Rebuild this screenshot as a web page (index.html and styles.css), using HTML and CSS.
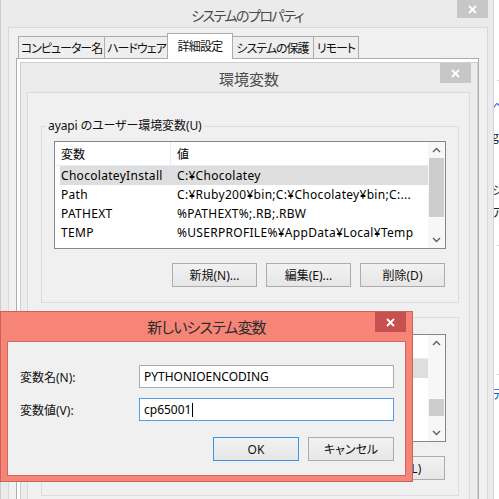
FILE: index.html
```html
<!DOCTYPE html>
<html lang="ja">
<head>
<meta charset="utf-8">
<title>環境変数</title>
<link rel="stylesheet" href="styles.css">
</head>
<body>
<div class="desk">

  <div class="bgwin">
    <div class="bg-rule r1"></div>
    <span class="bg-txt blue t1">ペ</span>
    <span class="bg-txt t2">g</span>
    <span class="bg-txt t3">シ</span>
    <span class="bg-txt t4">ア</span>
    <div class="bg-rule r2"></div>
    <div class="bg-rule r3"></div>
    <span class="bg-txt blue t5">デ</span>
  </div>

  <div class="win sys">
    <div class="titlebar tb-sys">
      <span class="title">システムのプロパティ</span>
      <span class="close gray"><svg width="9" height="9" viewBox="0 0 9 9"><path d="M1 1 L8 8 M8 1 L1 8" stroke="#fff" stroke-width="1.8"/></svg></span>
    </div>
    <div class="client sys-client">
      <div class="tabs">
        <span class="tab w1">コンピューター名</span>
        <span class="tab w2">ハードウェア</span>
        <span class="tab w3 active">詳細設定</span>
        <span class="tab w4">システムの保護</span>
        <span class="tab w5">リモート</span>
      </div>
      <div class="tabpanel"></div>
    </div>
  </div>

  <div class="win env">
    <div class="titlebar tb-env">
      <span class="title">環境変数</span>
      <span class="close gray"><svg width="9" height="9" viewBox="0 0 9 9"><path d="M1 1 L8 8 M8 1 L1 8" stroke="#fff" stroke-width="1.8"/></svg></span>
    </div>
    <div class="client env-client">
      <fieldset class="group g1">
        <legend>ayapi のユーザー環境変数(U)</legend>
        <div class="list">
          <div class="list-body">
            <div class="lv-head"><span class="c1">変数</span><span class="c2">値</span></div>
            <div class="lv-row sel"><span class="c1">ChocolateyInstall</span><span class="c2">C:¥Chocolatey</span></div>
            <div class="lv-row"><span class="c1">Path</span><span class="c2">C:¥Ruby200¥bin;C:¥Chocolatey¥bin;C:...</span></div>
            <div class="lv-row"><span class="c1">PATHEXT</span><span class="c2">%PATHEXT%;.RB;.RBW</span></div>
            <div class="lv-row"><span class="c1">TEMP</span><span class="c2">%USERPROFILE%¥AppData¥Local¥Temp</span></div>
          </div>
          <div class="vscroll">
            <span class="sb-btn"><svg width="9" height="6" viewBox="0 0 9 6"><path d="M1 5 L4.5 1.5 L8 5" fill="none" stroke="#606060" stroke-width="1.4"/></svg></span>
            <span class="sb-track"><span class="thumb th1"></span></span>
            <span class="sb-btn"><svg width="9" height="6" viewBox="0 0 9 6"><path d="M1 1 L4.5 4.5 L8 1" fill="none" stroke="#606060" stroke-width="1.4"/></svg></span>
          </div>
        </div>
        <div class="btnrow">
          <button class="btn">新規(N)...</button>
          <button class="btn">編集(E)...</button>
          <button class="btn">削除(D)</button>
        </div>
      </fieldset>

      <fieldset class="group g2">
        <div class="list">
          <div class="list-body">
            <div class="lv-head"><span class="c1"></span><span class="c2"></span></div>
            <div class="lv-row sel"></div>
          </div>
          <div class="vscroll">
            <span class="sb-btn"><svg width="9" height="6" viewBox="0 0 9 6"><path d="M1 5 L4.5 1.5 L8 5" fill="none" stroke="#606060" stroke-width="1.4"/></svg></span>
            <span class="sb-track"><span class="thumb th2"></span></span>
            <span class="sb-btn"><svg width="9" height="6" viewBox="0 0 9 6"><path d="M1 1 L4.5 4.5 L8 1" fill="none" stroke="#606060" stroke-width="1.4"/></svg></span>
          </div>
        </div>
        <div class="btnrow">
          <button class="btn"></button>
          <button class="btn"></button>
          <button class="btn">削除(L)</button>
        </div>
      </fieldset>
    </div>
  </div>

  <div class="win newvar">
    <div class="titlebar tb-new">
      <span class="title">新しいシステム変数</span>
      <span class="close red"><svg width="9" height="9" viewBox="0 0 9 9"><path d="M1 1 L8 8 M8 1 L1 8" stroke="#fff" stroke-width="1.8"/></svg></span>
    </div>
    <div class="client new-client">
      <div class="form">
        <label class="flabel">変数名(N):</label>
        <div class="input">PYTHONIOENCODING</div>
        <label class="flabel">変数値(V):</label>
        <div class="input focus">cp65001<span class="caret"></span></div>
      </div>
      <div class="btnrow dlg-btns">
        <button class="btn default">OK</button>
        <button class="btn">キャンセル</button>
      </div>
    </div>
  </div>

</div>
</body>
</html>
```

FILE: styles.css
```css
* { box-sizing: border-box; }
html, body { margin: 0; padding: 0; }
body {
  width: 499px;
  height: 499px;
  overflow: hidden;
  background: #fff;
  font-family: "Noto Sans", "Noto Sans CJK JP", sans-serif;
  font-size: 12px;
  color: #000;
  font-feature-settings: "palt";
}
.desk { position: relative; width: 499px; height: 499px; overflow: hidden; }

/* background window at the right edge */
.bgwin {
  position: absolute; left: 494px; top: 0; width: 20px; height: 499px;
  background: #fff; display: flex; flex-direction: column;
  font-family: "Noto Sans CJK JP", sans-serif; font-size: 12px; line-height: 14px;
}
.bg-rule { height: 1px; background: #d6d6d6; margin-left: 3px; }
.r1 { margin-top: 80px; }
.r2 { margin-top: 26px; }
.r3 { margin-top: 128px; }
.bg-txt { display: block; color: #222; margin-left: -2px; }
.bg-txt.blue { color: #1a5fd0; }
.t1 { margin-top: 18px; }
.t2 { margin-top: 16px; }
.t3 { margin-top: 40px; }
.t4 { margin-top: 8px; }
.t5 { margin-top: 12px; }

/* generic window */
.win { position: absolute; display: flex; flex-direction: column; }
.titlebar { display: grid; flex: none; }
.titlebar > * { grid-area: 1 / 1; }
.title {
  justify-self: center; align-self: center;
  font-family: "Noto Sans CJK JP", sans-serif;
  font-size: 15px; line-height: 18px; color: #4a4a4a;
  white-space: nowrap;
}
.close {
  justify-self: end; align-self: start;
  width: 31px; height: 20px;
  display: flex; align-items: center; justify-content: center;
}
.close svg { display: block; }
.close.gray { background: #c7c7c7; }
.close.red { background: #c75050; }
.client { background: #f0f0f0; flex: 1; display: flex; flex-direction: column; }

/* system properties window */
.sys {
  left: 0; top: 0; width: 494px; height: 530px;
  background: #ebebeb;
  border-left: 1px solid #cdcdcd; border-right: 1px solid #d4d4d4;
}
.tb-sys { height: 27px; padding-top: 2px; }
.tb-sys .title { font-size: 14px; letter-spacing: -1.5px; }
.tb-sys .close { height: 18px; margin-right: 5px; margin-top: -2px; }
.sys-client {
  margin: 0 5px 0 7px;
  border: 1px solid #d9d9d9;
  padding: 5px 8px 0 7px;
}
.tabs { display: flex; align-items: flex-end; height: 25px; margin-left: 2px; flex: none; }
.tab {
  height: 22px; border: 1px solid #acacac; border-bottom: none;
  background: #eeeeee;
  display: flex; align-items: center; justify-content: center;
  font-family: "Noto Sans CJK JP", sans-serif; font-size: 12px; color: #111;
  white-space: nowrap; letter-spacing: -1px;
}
.tab + .tab { margin-left: -1px; }
.w1 { width: 87px; }
.w2 { width: 65px; }
.w3 { width: 66px; letter-spacing: -0.8px; }
.w4 { width: 83px; }
.w5 { width: 46px; }
.tab.active {
  height: 26px; margin-bottom: -1px; margin-left: -2px;
  background: #fff; position: relative; z-index: 1; padding-bottom: 2px;
}
.tab.active + .tab { margin-left: -2px; }
.tabpanel { flex: 1; background: #fff; border: 1px solid #adadad; }

/* environment variables window */
.env {
  left: 20px; top: 62px; width: 458px; height: 460px;
  background: #ececec; border: 1px solid #cfcfcf;
}
.tb-env { height: 29px; }
.tb-env .title { padding-top: 2px; }
.tb-env .close { margin-right: 6px; }
.env-client {
  margin: 0 7px 0 6px;
  border: 1px solid #dadada;
  padding-top: 25px;
}
.group {
  margin: 0 10px 0 13px;
  border: 1px solid #dcdcdc;
  padding: 7px 12px 15px 12px;
  min-width: 0;
}
.group legend {
  padding: 0 2px; margin-left: -8px;
  font-family: "Noto Sans", "Noto Sans CJK JP", sans-serif;
  font-size: 12px; line-height: 16px; color: #111;
  letter-spacing: -0.1px;
}
.g2 { margin-top: 14px; padding-top: 16px; }

.list {
  height: 108px; border: 1px solid #828790; background: #fff;
  display: flex;
}
.list-body { flex: 1; overflow: hidden; min-width: 0; }
.lv-head {
  height: 24px; display: flex; align-items: stretch;
  border-bottom: 1px solid #e3ecf7;
}
.lv-head span { display: flex; align-items: center; font-family: "Noto Sans CJK JP", sans-serif; }
.lv-head .c1 { width: 116px; padding-left: 6px; border-right: 1px solid #e3ecf7; }
.lv-head .c2 { padding-left: 6px; }
.lv-row {
  height: 19px; margin-left: 5px; display: flex; align-items: center;
  white-space: nowrap; letter-spacing: 0.3px;
}
.lv-row.sel { background: #dedede; }
.lv-row .c1 { width: 111px; padding-left: 1px; flex: none; overflow: hidden; }
.lv-row .c2 { padding-left: 6px; }

.vscroll {
  width: 17px; flex: none; background: #f7f7f7;
  display: flex; flex-direction: column;
}
.sb-btn { height: 16px; display: flex; align-items: center; justify-content: center; flex: none; }
.sb-btn svg { display: block; }
.sb-track { flex: 1; display: flex; flex-direction: column; }
.thumb { display: block; width: 15px; margin-left: 1px; background: #cdcdcd; }
.th1 { height: 59px; }
.th2 { height: 17px; margin-top: 48px; }

.btnrow { display: flex; justify-content: flex-end; gap: 9px; margin-top: 14px; margin-right: 1px; }
.btn {
  width: 85px; height: 24px; margin: 0; padding: 0;
  border: 1px solid #acacac;
  background: linear-gradient(#f2f2f2, #e6e6e6);
  font-family: "Noto Sans", "Noto Sans CJK JP", sans-serif;
  font-size: 12px; color: #111;
  font-feature-settings: "palt";
}

/* new system variable dialog */
.newvar {
  left: 0; top: 311px; width: 413px; height: 171px;
  background: #f68578; border: 1px solid #c9625a;
}
.tb-new { height: 29px; }
.tb-new .title { color: #2b2b2b; padding-top: 1px; letter-spacing: -0.9px; }
.tb-new .close { margin-right: 6px; }
.new-client {
  margin: 0 6px 5px 6px;
  border: 1px solid #cf6a60;
  padding: 23px 11px 13px 12px;
}
.form {
  display: grid; grid-template-columns: 119px 1fr; row-gap: 10px;
  align-items: center;
}
.flabel { font-family: "Noto Sans", "Noto Sans CJK JP", sans-serif; color: #111; }
.input {
  height: 23px; border: 1px solid #ababab; background: #fff;
  padding-left: 4px; display: flex; align-items: center; white-space: nowrap;
}
.input.focus { border-color: #569de5; }
.caret { display: inline-block; width: 1px; height: 14px; background: #000; margin-left: 1px; }
.dlg-btns { margin-top: 16px; margin-right: 0; }
.dlg-btns .btn { width: 86px; }
.btn.default { border-color: #3d94e6; }
```
